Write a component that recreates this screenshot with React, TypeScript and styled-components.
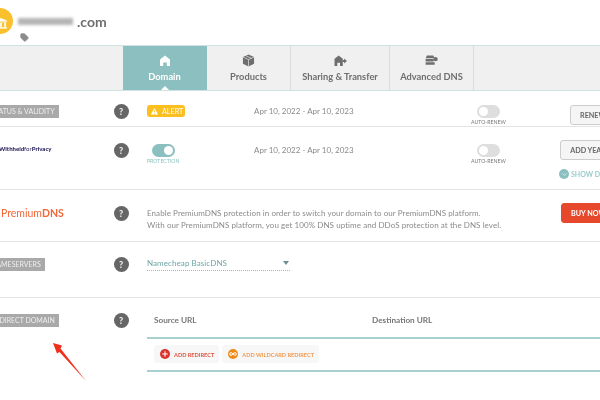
import { createGlobalStyle, styled } from 'styled-components'
import { Plus, Infinity as InfinityIcon, ChevronDown, TriangleAlert, Tag } from 'lucide-react'

const GlobalStyle = createGlobalStyle`
  html, body {
    margin: 0;
    padding: 0;
    background: #fff;
    overflow: hidden;
    width: 600px;
    height: 400px;
  }
  * {
    box-sizing: border-box;
  }
`
const Page = styled.div`
  position: relative;
  width: 625px;
  height: 400px;
  margin-left: -9px;
  font-family: Lato, "Noto Sans", sans-serif;
  color: #777;
  filter: blur(0.35px);
`
const Header = styled.header`
  display: flex;
  align-items: flex-start;
  height: 45px;
`
const Logo = styled.div`
  flex: none;
  width: 26px;
  height: 26px;
  margin: 8px 0 0 -4px;
  border-radius: 50%;
  background: #fbc02d;
  display: flex;
  align-items: center;
  justify-content: flex-end;
  padding: 4px 5px 0 0;
`
const DomainName = styled.div`
  display: flex;
  align-items: center;
  margin: 13px 0 0 5px;
`
const Blurred = styled.span`
  display: block;
  width: 55px;
  height: 7px;
  background: #b5b5b5;
  filter: blur(1.5px);
`
const Tld = styled.span`
  margin-left: 4px;
  font-size: 14px;
  font-weight: 700;
  color: #6f6f6f;
`
const TagMark = styled.div`
  position: absolute;
  left: 29px;
  top: 33px;
  display: flex;
  color: #8c8c8c;
`
const TabBar = styled.nav`
  display: flex;
  height: 46px;
  padding-left: 132px;
  background: #f0f0f0;
  border-top: 1px solid #cfe2e2;
  border-bottom: 1px solid #cfe2e2;
`
const Tab = styled.div<{ $active?: boolean; $width: number }>`
  position: relative;
  flex: none;
  width: ${p => p.$width}px;
  display: flex;
  flex-direction: column;
  align-items: center;
  padding-top: 8px;
  gap: 5px;
  font-size: 9.3px;
  line-height: 12px;
  font-weight: 700;
  color: ${p => (p.$active ? '#fff' : '#6e6e6e')};
  background: ${p => (p.$active ? '#8cc0c0' : 'transparent')};
  border-right: 1px solid ${p => (p.$active ? 'transparent' : '#d8dcdc')};
  &::after {
    content: '';
    display: ${p => (p.$active ? 'block' : 'none')};
    position: absolute;
    left: 50%;
    bottom: 0;
    margin-left: -4px;
    border: 4px solid transparent;
    border-top: 0;
    border-bottom-color: #fff;
  }
`
const TabIcon = styled.span`
  display: flex;
  align-items: center;
  justify-content: center;
  height: 12px;
`
const Row = styled.section<{ $height: number; $top: number; $last?: boolean }>`
  display: grid;
  grid-template-columns: 122.5px 33.5px 1fr;
  align-items: start;
  height: ${p => p.$height}px;
  padding-top: ${p => p.$top}px;
  border-bottom: ${p => (p.$last ? '0' : '1px solid #e4e4e4')};
`
const LabelCell = styled.div`
  display: flex;
  align-items: center;
  height: 15px;
`
const Label = styled.span`
  display: block;
  height: 13px;
  padding: 0 4px 0 0;
  background: #a9a9a9;
  color: #eee;
  font-size: 7px;
  line-height: 13px;
  white-space: nowrap;
`
const Withheld = styled.span`
  display: block;
  margin: 0 0 4px 8px;
  font-size: 6px;
  font-weight: 900;
  white-space: nowrap;
  color: #2c2560;
  i {
    font-style: normal;
    font-weight: 400;
  }
`
const Premium = styled.span`
  display: block;
  margin-left: 10px;
  font-size: 10.5px;
  font-weight: 400;
  color: #f2683a;
  b {
    font-weight: 700;
  }
`
const Help = styled.span`
  display: flex;
  align-items: center;
  justify-content: center;
  width: 15px;
  height: 15px;
  border-radius: 50%;
  background: #666;
  color: #eee;
  font-size: 9px;
  font-weight: 900;
`
const Content = styled.div`
  display: grid;
  grid-template-columns: 107px 217px 36px 1fr;
  align-items: start;
`
const Alert = styled.span`
  display: flex;
  align-items: center;
  gap: 3px;
  width: 38px;
  height: 12px;
  margin-top: 1.5px;
  padding-left: 3px;
  border-radius: 3px;
  background: #fbbf1f;
  color: #fff;
  font-size: 7.2px;
`
const Dates = styled.span`
  font-size: 8px;
  line-height: 15px;
  color: #8a8a8a;
  white-space: nowrap;
`
const SwitchBox = styled.div`
  width: fit-content;
  margin-top: 1.5px;
  display: flex;
  flex-direction: column;
  align-items: center;
  gap: 1px;
`
const Track = styled.span<{ $on?: boolean }>`
  display: flex;
  justify-content: ${p => (p.$on ? 'flex-end' : 'flex-start')};
  width: 23px;
  height: 13px;
  padding: 2px;
  border-radius: 7px;
  background: ${p => (p.$on ? '#8cc0c0' : '#dedede')};
  &::after {
    content: '';
    width: 9px;
    height: 9px;
    border-radius: 50%;
    background: #fff;
  }
`
const SwitchText = styled.span<{ $teal?: boolean }>`
  font-size: 5.2px;
  line-height: 7px;
  white-space: nowrap;
  color: ${p => (p.$teal ? '#8cc0c0' : '#777')};
`
const Button = styled.span<{ $red?: boolean; $shift: number }>`
  display: inline-flex;
  align-items: center;
  height: 20px;
  margin-top: ${p => p.$shift}px;
  padding: 0 9px;
  border-radius: 3px;
  font-size: 7.2px;
  font-weight: 700;
  white-space: nowrap;
  color: ${p => (p.$red ? '#fff' : '#666')};
  background: ${p => (p.$red ? '#e5482b' : '#f5f5f5')};
  border: 1px solid ${p => (p.$red ? '#e5482b' : '#ccc')};
`
const ActionCell = styled.div`
  display: flex;
  flex-direction: column;
  align-items: flex-end;
  gap: 9px;
`
const ShowDetails = styled.span`
  display: flex;
  align-items: center;
  gap: 2px;
  width: 57px;
  color: #9accc9;
  font-size: 7px;
  font-weight: 700;
  white-space: nowrap;
`
const DetailDot = styled.span`
  flex: none;
  display: flex;
  align-items: center;
  justify-content: center;
  width: 10px;
  height: 10px;
  border-radius: 50%;
  background: #8cc0c0;
  color: #fff;
`
const PremiumContent = styled.div`
  display: grid;
  grid-template-columns: 1fr auto;
  align-items: start;
`
const Description = styled.p`
  margin: 1px 0 0;
  font-size: 8px;
  line-height: 12.4px;
  color: #8a8a8a;
  letter-spacing: 0.07px;
  white-space: nowrap;
`
const Select = styled.div`
  display: flex;
  justify-content: space-between;
  align-items: center;
  width: 143px;
  height: 14.5px;
  padding-right: 1px;
  border-bottom: 1px dotted #8cc0c0;
  color: #6fa5a5;
  font-size: 8px;
  letter-spacing: 0.08px;
  &::after {
    content: '';
    border: 3px solid transparent;
    border-bottom: 0;
    border-top: 4px solid #6f8f8f;
  }
`
const RedirectHead = styled.div`
  display: grid;
  grid-template-columns: 218px 1fr;
  height: 26.5px;
  padding-left: 7px;
  font-size: 8.2px;
  line-height: 15px;
  font-weight: 700;
  color: #777;
  border-bottom: 2px solid #a8d0cf;
`
const RedirectActions = styled.div`
  display: flex;
  gap: 3px;
  height: 33px;
  padding: 6px 0 0 7px;
  border-bottom: 2px solid #a8d0cf;
`
const RedirectButton = styled.span<{ $color: string }>`
  display: inline-flex;
  align-items: center;
  gap: 4px;
  height: 18px;
  padding: 0 5px 0 6px;
  border-radius: 3px;
  background: #f7f7f7;
  color: ${p => p.$color};
  font-size: 5.6px;
  font-weight: 700;
  white-space: nowrap;
`
const RoundIcon = styled.span<{ $color: string }>`
  display: flex;
  align-items: center;
  justify-content: center;
  width: 10px;
  height: 10px;
  border-radius: 50%;
  background: ${p => p.$color};
  color: #fff;
`
const ArrowMark = styled.svg`
  position: absolute;
  left: 59px;
  top: 340px;
`

function HomeIcon() {
  return (
    <svg width="10" height="11" viewBox="0 0 10 11">
      <path fill="#fff" d="M5 0.5 L10 4.6 V11 H6.8 V7.4 H3.2 V11 H0 V4.6 Z" />
    </svg>
  )
}

function BoxIcon() {
  return (
    <svg width="13" height="13" viewBox="0 0 14 14">
      <path fill="#6e6e6e" d="M7 0.5 L13 3.2 V10.5 L7 13.5 L1 10.5 V3.2 Z" />
      <path fill="none" stroke="#f0f0f0" strokeWidth="0.7" d="M1 3.2 L7 6 L13 3.2 M7 6 V13.5 M4 1.8 L10 4.6" />
    </svg>
  )
}

function SharingIcon() {
  return (
    <svg width="13" height="11" viewBox="0 0 14 12">
      <path fill="#6e6e6e" d="M5 0.5 L9.5 4 V12 H6.5 V8.5 H3.5 V12 H0.5 V4 Z" />
      <path fill="#6e6e6e" d="M9.5 5.5 H11 V3.8 L14 6.5 L11 9.2 V7.5 H9.5 Z" />
    </svg>
  )
}

function DnsIcon() {
  return (
    <svg width="13" height="10" viewBox="0 0 14 11">
      <path fill="#6e6e6e" d="M2 0.5 H9 L10.5 3.5 H0.5 Z" />
      <rect x="0.5" y="4.4" width="9" height="2.8" rx="0.6" fill="#6e6e6e" />
      <rect x="0.5" y="8" width="10" height="2.8" rx="0.6" fill="#6e6e6e" />
      <circle cx="11.5" cy="4.5" r="2.4" fill="#6e6e6e" />
    </svg>
  )
}

function BankIcon() {
  return (
    <svg width="14" height="11" viewBox="0 0 14 11">
      <path fill="#fff" d="M7 0 L13.5 3 H0.5 Z" />
      <rect x="1" y="3.4" width="12" height="1" fill="#fff" />
      <rect x="2" y="4.8" width="1.8" height="4" fill="#fff" />
      <rect x="6.1" y="4.8" width="1.8" height="4" fill="#fff" />
      <rect x="10.2" y="4.8" width="1.8" height="4" fill="#fff" />
      <rect x="1" y="9.2" width="12" height="1.4" fill="#fff" />
    </svg>
  )
}

function App() {
  return (
    <Page>
      <GlobalStyle />
      <Header>
        <Logo>
          <BankIcon />
        </Logo>
        <DomainName>
          <Blurred />
          <Tld>.com</Tld>
        </DomainName>
      </Header>
      <TagMark>
        <Tag size={9} fill="#8c8c8c" />
      </TagMark>
      <TabBar>
        <Tab $active $width={84}>
          <TabIcon><HomeIcon /></TabIcon>
          Domain
        </Tab>
        <Tab $width={84}>
          <TabIcon><BoxIcon /></TabIcon>
          Products
        </Tab>
        <Tab $width={99}>
          <TabIcon><SharingIcon /></TabIcon>
          Sharing &amp; Transfer
        </Tab>
        <Tab $width={84}>
          <TabIcon><DnsIcon /></TabIcon>
          Advanced DNS
        </Tab>
      </TabBar>

      <Row $height={36} $top={12.5}>
        <LabelCell><Label>STATUS &amp; VALIDITY</Label></LabelCell>
        <Help>?</Help>
        <Content>
          <Alert><TriangleAlert size={9} fill="#fff" color="#fbbf1f" />ALERT</Alert>
          <Dates>Apr 10, 2022 - Apr 10, 2023</Dates>
          <SwitchBox>
            <Track />
            <SwitchText>AUTO-RENEW</SwitchText>
          </SwitchBox>
          <ActionCell><Button $shift={1.5}>RENEW</Button></ActionCell>
        </Content>
      </Row>

      <Row $height={63} $top={15.5}>
        <LabelCell><Withheld>Withheld<i>for</i>Privacy</Withheld></LabelCell>
        <Help>?</Help>
        <Content>
          <SwitchBox>
            <Track $on />
            <SwitchText $teal>PROTECTION</SwitchText>
          </SwitchBox>
          <Dates>Apr 10, 2022 - Apr 10, 2023</Dates>
          <SwitchBox>
            <Track />
            <SwitchText>AUTO-RENEW</SwitchText>
          </SwitchBox>
          <ActionCell>
            <Button $shift={-2.5}>ADD YEAR</Button>
            <ShowDetails>
              <DetailDot><ChevronDown size={7} /></DetailDot>
              SHOW DETAILS
            </ShowDetails>
          </ActionCell>
        </Content>
      </Row>

      <Row $height={52} $top={15.5}>
        <LabelCell><Premium>Premium<b>DNS</b></Premium></LabelCell>
        <Help>?</Help>
        <PremiumContent>
          <Description>
            Enable PremiumDNS protection in order to switch your domain to our PremiumDNS platform.
            <br />
            With our PremiumDNS platform, you get 100% DNS uptime and DDoS protection at the DNS level.
          </Description>
          <ActionCell><Button $red $shift={-2.5}>BUY NOW</Button></ActionCell>
        </PremiumContent>
      </Row>

      <Row $height={56} $top={14.5}>
        <LabelCell><Label>NAMESERVERS</Label></LabelCell>
        <Help>?</Help>
        <Select>Namecheap BasicDNS</Select>
      </Row>

      <Row $height={90} $top={14.5} $last>
        <LabelCell><Label>REDIRECT DOMAIN</Label></LabelCell>
        <Help>?</Help>
        <div>
          <RedirectHead>
            <span>Source URL</span>
            <span>Destination URL</span>
          </RedirectHead>
          <RedirectActions>
            <RedirectButton $color="#e0533f">
              <RoundIcon $color="#d9342b"><Plus size={8} strokeWidth={3} /></RoundIcon>
              ADD REDIRECT
            </RedirectButton>
            <RedirectButton $color="#f29a50">
              <RoundIcon $color="#ef8a17"><InfinityIcon size={8} strokeWidth={3} /></RoundIcon>
              ADD WILDCARD REDIRECT
            </RedirectButton>
          </RedirectActions>
        </div>
      </Row>

      <ArrowMark width="40" height="44" viewBox="0 0 40 44">
        <path fill="#f0301c" d="M3 3 L12 5.5 L10.5 8.5 L36 41 L9.5 12 L7 13.5 Z" />
      </ArrowMark>
    </Page>
  )
}

export default App
